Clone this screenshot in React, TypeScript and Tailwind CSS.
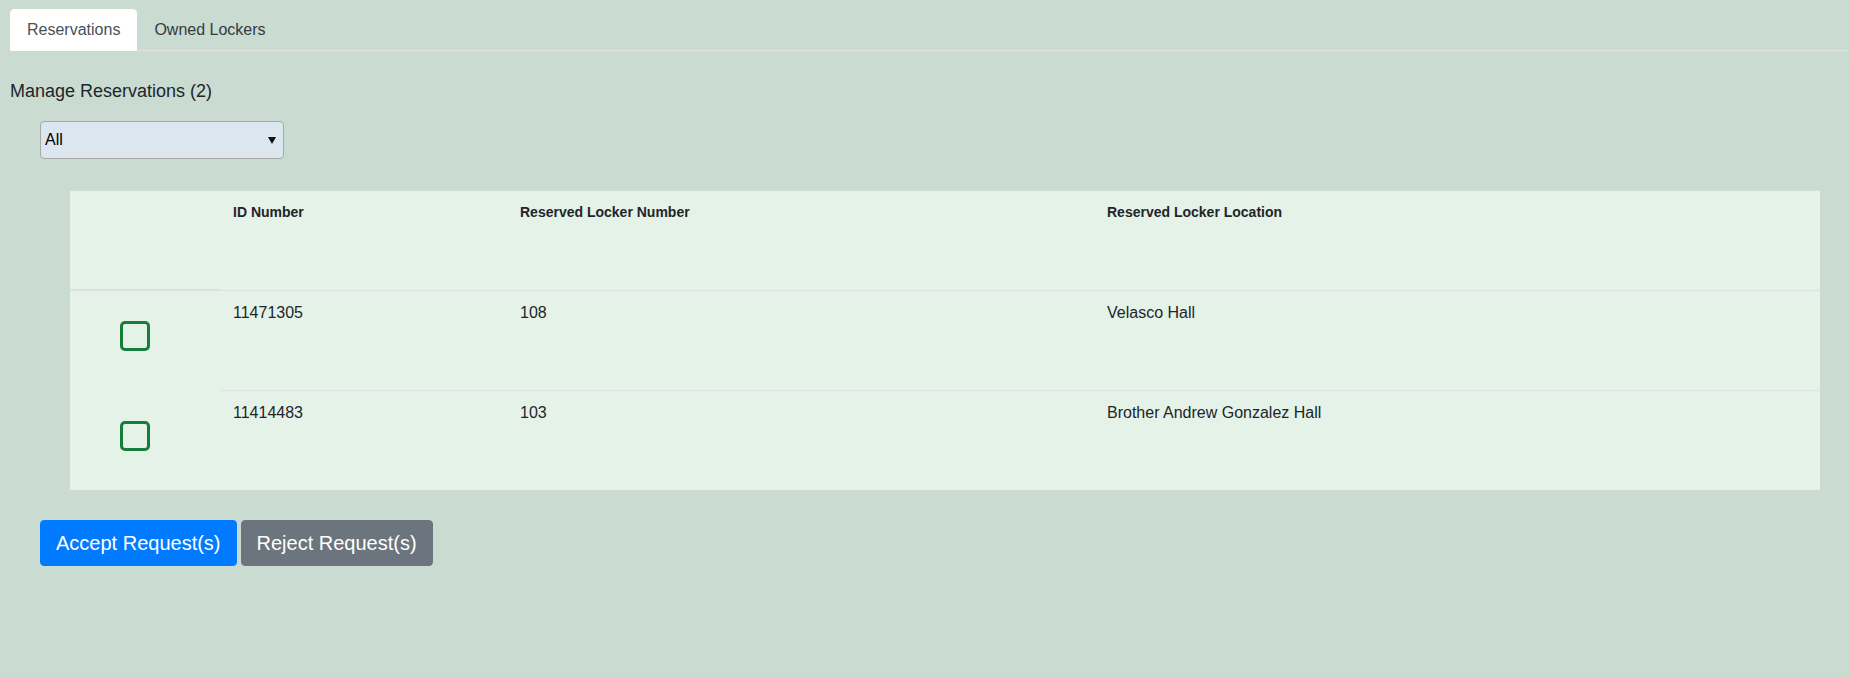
import React from 'react';

interface Reservation {
  idNumber: string;
  lockerNumber: string;
  location: string;
}

const reservations: Reservation[] = [
  { idNumber: '11471305', lockerNumber: '108', location: 'Velasco Hall' },
  { idNumber: '11414483', lockerNumber: '103', location: 'Brother Andrew Gonzalez Hall' },
];

const App: React.FC = () => {
  return (
    <div className="min-h-screen bg-[#cadbd1] font-['Liberation_Sans',Arial,sans-serif] text-[#212529]">
      {/* tabs */}
      <div className="pl-[10px] pt-[9px]">
        <div className="flex border-b border-[#dee2e6]">
          <button className="-mb-px rounded-t-[4px] border border-white bg-white px-4 py-2 text-base leading-6 text-[#495057]">
            Reservations
          </button>
          <button className="-mb-px border border-transparent px-4 py-2 text-base leading-6 text-[#343a40]">
            Owned Lockers
          </button>
        </div>
      </div>

      <h2 className="ml-[10px] mt-[30px] text-[18px] leading-[21px]">Manage Reservations (2)</h2>

      <div className="relative ml-[40px] mt-[19px] w-[244px]">
        <select className="h-[38px] w-full appearance-none rounded-[4px] border border-[#a9a9a9] bg-[#dce6ef] pl-[4px] text-base text-black">
          <option>All</option>
          <option>Pending</option>
          <option>Accepted</option>
        </select>
        <svg className="pointer-events-none absolute right-[8px] top-[16px] h-[7px] w-[8px]" viewBox="0 0 8 7">
          <polygon points="0,0 8,0 4,7" fill="#111" />
        </svg>
      </div>

      {/* reservations table */}
      <div className="ml-[70px] mr-[29px] mt-[31px] border-t border-[#d6dde1] bg-[#e4f2e8]">
        <div className="grid h-[100px] grid-cols-[151px_287px_587px_1fr] text-sm font-bold leading-normal">
          <div className="border-b-2 border-[#dde1e4]" />
          <div className="border-b border-[#dde1e4] px-3 pt-[11px]">ID Number</div>
          <div className="border-b border-[#dde1e4] px-3 pt-[11px]">Reserved Locker Number</div>
          <div className="border-b border-[#dde1e4] px-3 pt-[11px]">Reserved Locker Location</div>
        </div>
        {reservations.map((r, i) => {
          const last = i === reservations.length - 1;
          const cell = last ? 'px-3 pt-[10px]' : 'border-b border-[#dde1e4] px-3 pt-[10px]';
          return (
            <div
              key={r.idNumber}
              className={`grid grid-cols-[151px_287px_587px_1fr] text-base leading-normal ${last ? 'h-[99px]' : 'h-[100px]'}`}
            >
              <div className="pl-[50px] pt-[30px]">
                <div className="h-[30px] w-[30px] rounded-[5px] border-[3px] border-[#167d3b]" />
              </div>
              <div className={cell}>{r.idNumber}</div>
              <div className={cell}>{r.lockerNumber}</div>
              <div className={cell}>{r.location}</div>
            </div>
          );
        })}
      </div>

      <div className="ml-[40px] mt-[30px] flex gap-[4px]">
        <button className="h-[46px] rounded-[4px] border border-[#007bff] bg-[#007bff] px-[15px] text-xl text-white">
          Accept Request(s)
        </button>
        <button className="h-[46px] rounded-[4px] border border-[#6c757d] bg-[#6c757d] px-[15px] text-xl text-white">
          Reject Request(s)
        </button>
      </div>
    </div>
  );
};

export default App;
